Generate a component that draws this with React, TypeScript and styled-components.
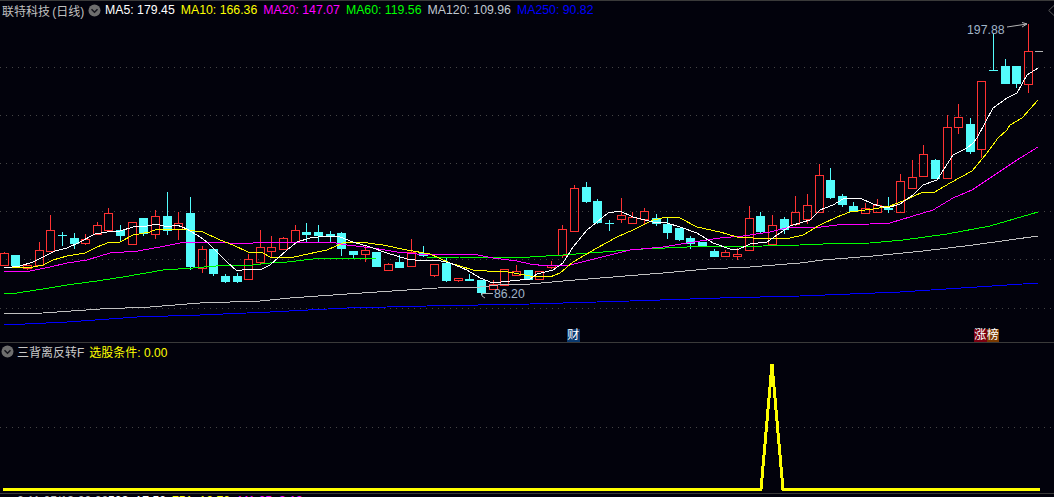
import styled, { createGlobalStyle } from "styled-components";

type Candle = {
  kind: "r" | "c";
  top: number;
  bottom: number;
  high?: number;
  low?: number;
};

const c = (kind: "r" | "c", top: number, bottom: number, high?: number, low?: number): Candle => ({
  kind,
  top,
  bottom,
  high,
  low,
});

const CANDLES: Candle[] = [
  c("r", 253, 265, 252),
  c("c", 255, 265, undefined, 267),
  c("r", 265, 268, undefined, 270),
  c("r", 250, 265, 242),
  c("r", 230, 251, 215),
  c("c", 235, 235, 232, 246),
  c("c", 238, 243, 233, 249),
  c("r", 239, 243, 234, 245),
  c("r", 225, 234, 222),
  c("r", 213, 230, 208),
  c("c", 230, 235, 225, 241),
  c("r", 222, 244),
  c("c", 218, 233, undefined, 236),
  c("r", 216, 234, 210, 239),
  c("c", 216, 230, 192, 235),
  c("r", 223, 229, 212, 240),
  c("c", 213, 266, 197, 270),
  c("r", 249, 268, 246, 273),
  c("c", 249, 273, undefined, 276),
  c("c", 276, 281, 274, 283),
  c("c", 276, 281, 273, 283),
  c("r", 259, 279, 254),
  c("r", 247, 262, 230, 264),
  c("r", 247, 251, 236, 257),
  c("r", 238, 249, 237),
  c("r", 230, 242, 225),
  c("c", 232, 234, 223, 242),
  c("c", 232, 235, 225, 242),
  c("c", 234, 236, 231, 242),
  c("c", 233, 248, 232, 256),
  c("c", 251, 254, undefined, 258),
  c("r", 250, 254, 246, 262),
  c("c", 252, 266),
  c("r", 264, 270, 263),
  c("c", 262, 267, 255),
  c("r", 252, 266, 239, 267),
  c("c", 253, 255, 246, 257),
  c("r", 264, 275, undefined, 277),
  c("c", 263, 280, 258, 282),
  c("r", 278, 280, undefined, 282),
  c("c", 279, 280, 274, 281),
  c("c", 280, 292, undefined, 295),
  c("r", 284, 289, 280),
  c("r", 269, 285),
  c("r", 271, 275, 265),
  c("c", 270, 279),
  c("r", 271, 279, undefined, 280),
  c("r", 265, 267, 261, 269),
  c("r", 229, 255, 225, 258),
  c("r", 188, 231, 185),
  c("c", 187, 201, 182, 203),
  c("c", 201, 222, 199, 224),
  c("c", 223, 223, 220, 231),
  c("r", 215, 219, 198, 223),
  c("r", 217, 223, 212, 224),
  c("r", 211, 219, 208, 225),
  c("c", 218, 223, 214, 226),
  c("c", 224, 232, 218, 239),
  c("c", 228, 239, undefined, 241),
  c("c", 238, 243, 236, 249),
  c("c", 242, 246),
  c("c", 251, 256, 249),
  c("r", 252, 256, 250),
  c("r", 254, 256, 248, 260),
  c("r", 218, 250, 206),
  c("c", 216, 231, 212, 234),
  c("r", 225, 244, 215, 246),
  c("c", 219, 229, 217, 234),
  c("r", 212, 224, 196, 226),
  c("r", 205, 219, 194, 224),
  c("r", 175, 212, 164),
  c("c", 180, 197, 168, 199),
  c("c", 196, 204, 194, 207),
  c("c", 206, 211, 202),
  c("r", 208, 213, 203),
  c("r", 205, 212, 199),
  c("c", 208, 209, 197, 213),
  c("r", 181, 212, 174),
  c("r", 177, 188, 160),
  c("r", 154, 176, 145),
  c("c", 160, 178, 159),
  c("r", 127, 178, 115),
  c("r", 117, 127, 104, 134),
  c("c", 124, 151, 118, 154),
  c("r", 81, 149, undefined, 158),
  c("c", 70, 70, 33),
  c("c", 66, 83, 59),
  c("c", 66, 83, undefined, 88),
  c("r", 51, 84, 24, 93),
];

const MA_LINES = [
  {
    color: "#0000ff",
    points:
      "4,325 67,322 137,317 200,315 270,312 347,308 427,306 530,304 630,301 720,298 800,296 900,292 1038,283",
  },
  {
    color: "#c0c0c0",
    points:
      "4,314 43,313 100,309 150,307 200,303 260,301 290,298 347,294 407,290 453,287 480,287 507,284 530,284 563,281 613,277 663,273 707,269 750,267 800,263 823,260 873,256 923,251 973,245 1038,236",
  },
  {
    color: "#00ff00",
    points:
      "4,294 17,293 43,289 67,285 97,281 123,277 163,270 193,268 227,265 253,265 270,263 287,262 313,259 377,258 427,258 460,257 530,257 563,255 603,252 643,249 687,247 763,246 800,245 823,244 870,243 903,240 947,234 990,226 1038,212",
  },
  {
    color: "#ff00ff",
    points:
      "4,272 30,271 50,267 67,263 87,260 110,253 138,251 160,247 180,243 200,242 220,242 237,244 253,243 270,242 293,242 330,242 347,245 373,248 397,252 417,254 473,254 493,258 517,261 530,264 547,266 570,265 590,260 610,255 630,250 663,247 687,243 720,238 743,236 770,232 790,227 813,228 837,225 870,224 890,223 923,213 933,210 953,198 972,190 990,178 1017,160 1038,147",
  },
  {
    color: "#ffff00",
    points:
      "4,267 33,267 43,265 53,260 67,256 85,253 97,247 110,242 120,242 133,235 150,232 157,229 180,229 203,232 220,240 233,245 248,252 263,253 270,257 290,258 303,255 327,250 343,243 360,242 383,245 407,250 430,254 450,263 473,270 487,271 503,271 530,276 550,277 560,273 573,262 597,248 617,237 633,230 653,220 667,217 680,218 697,227 720,232 737,237 753,238 767,239 790,238 803,235 820,225 837,217 850,212 873,209 890,206 903,201 923,192 935,192 950,183 972,171 987,153 998,138 1007,130 1010,125 1022,118 1038,100",
  },
  {
    color: "#ffffff",
    points:
      "4,268 20,266 33,262 43,257 55,251 67,248 80,242 95,234 107,232 120,231 133,227 147,226 157,224 167,227 177,225 187,229 200,237 207,242 217,252 227,262 237,271 248,269 262,269 270,265 287,250 297,242 310,238 327,236 340,237 353,242 370,247 387,253 407,259 423,261 437,260 450,263 467,270 480,278 493,283 510,281 530,279 537,274 553,270 563,263 573,247 587,230 597,222 608,213 620,211 633,217 653,222 667,223 680,227 697,233 713,243 730,249 737,250 750,244 767,242 780,233 790,226 803,222 810,220 820,210 833,205 843,199 860,198 873,204 887,208 900,204 913,195 923,185 937,180 953,155 967,148 973,143 977,138 993,108 1007,98 1017,93 1027,75 1038,68",
  },
];

const MA_LABELS = [
  { label: "MA5: 179.45", color: "#ffffff" },
  { label: "MA10: 166.36", color: "#ffff00" },
  { label: "MA20: 147.07", color: "#ff00ff" },
  { label: "MA60: 119.56", color: "#00ff00" },
  { label: "MA120: 109.96", color: "#c0c8d0" },
  { label: "MA250: 90.82", color: "#0000ff" },
];

const GRID_MAIN = [67, 115, 163, 211, 259, 308];

function candleX(i: number) {
  return Math.round(3.7 + 11.64 * i);
}

function CandleMark({ candle, x }: { candle: Candle; x: number }) {
  const color = candle.kind === "r" ? "#ff3232" : "#54fcfc";
  const cx = x + 0.5;
  const flat = candle.bottom - candle.top < 1;
  return (
    <g>
      {candle.high !== undefined && (
        <line x1={cx} x2={cx} y1={candle.high} y2={candle.top} stroke={color} />
      )}
      {candle.low !== undefined && (
        <line x1={cx} x2={cx} y1={candle.bottom} y2={candle.low} stroke={color} />
      )}
      {flat ? (
        <line x1={x - 4} x2={x + 5} y1={candle.top + 0.5} y2={candle.top + 0.5} stroke={color} />
      ) : candle.kind === "r" ? (
        <rect
          x={x - 3.5}
          y={candle.top + 0.5}
          width={8}
          height={candle.bottom - candle.top}
          fill="none"
          stroke={color}
        />
      ) : (
        <rect x={x - 4} y={candle.top} width={9} height={candle.bottom - candle.top + 1} fill={color} />
      )}
    </g>
  );
}

function Toggle() {
  return (
    <ToggleIcon viewBox="0 0 13 13">
      <circle cx="6.5" cy="6.5" r="6" fill="#6e6e6e" />
      <path d="M3.5 5.2 L6.5 8.2 L9.5 5.2" fill="none" stroke="#15151c" strokeWidth="1.5" />
    </ToggleIcon>
  );
}

export default function App() {
  return (
    <>
      <GlobalStyle />
      <Screen>
        <MainPanel>
          <PanelHeader>
            <Title>联特科技 (日线)</Title>
            <Toggle />
            <MaList>
              {MA_LABELS.map((m) => (
                <MaValue key={m.label} $color={m.color}>
                  {m.label}
                </MaValue>
              ))}
            </MaList>
            <CollapseIcon viewBox="0 0 6 11">
              <path d="M6 0.5 L0.7 5.5 L6 10.5" />
            </CollapseIcon>
          </PanelHeader>
          <ChartArea>
            <MainChart viewBox="0 19 1054 323">
              {GRID_MAIN.map((y) => (
                <GridLine key={y} x1={0} x2={1054} y1={y + 0.5} y2={y + 0.5} />
              ))}
              {CANDLES.map((candle, i) => (
                <CandleMark key={i} candle={candle} x={candleX(i)} />
              ))}
              <line x1={1035} x2={1043} y1={51.5} y2={51.5} stroke="#b4b4b4" />
              {MA_LINES.map((m) => (
                <polyline key={m.color} points={m.points} fill="none" stroke={m.color} />
              ))}
              <PriceLabel x={967} y={34}>
                197.88
              </PriceLabel>
              <ArrowPath d="M1007 27 L1027 24 M1022 22.5 L1027 24 L1022 27" />
              <PriceLabel x={494} y={298}>
                86.20
              </PriceLabel>
              <ArrowPath d="M482 293.5 L493 293.5 M482 293.5 L482 296 M482 296 L485 298" />
            </MainChart>
            <Marker $left={567}>
              <MarkerCell $bg="#0a3a70">财</MarkerCell>
            </Marker>
            <Marker $left={974}>
              <MarkerCell $bg="#7a0010">涨</MarkerCell>
              <MarkerCell $bg="#7a3a00">榜</MarkerCell>
            </Marker>
          </ChartArea>
        </MainPanel>
        <SubPanel>
          <SubHeader>
            <Toggle />
            <SubTitle>三背离反转F</SubTitle>
            <Condition>选股条件: 0.00</Condition>
          </SubHeader>
          <SubChart viewBox="0 359 1054 133">
            <GridLine x1={0} x2={1054} y1={427.5} y2={427.5} />
            <SignalLine points="3,489.5 761,489.5 772,364 783,489.5 1040,489.5" />
          </SubChart>
        </SubPanel>
        <NextPanel>
          <NextText $color="#b8b8b8" $width={91}>
            2.11 05/13 00:00
          </NextText>
          <NextText $color="#ffffff" $width={64}>
            503: 17.50
          </NextText>
          <NextText $color="#ffff00" $width={66}>
            751: 12.70
          </NextText>
          <NextText $color="#ff00ff" $width={70}>
            M1.65: 3.13
          </NextText>
        </NextPanel>
      </Screen>
    </>
  );
}

const GlobalStyle = createGlobalStyle`
  html, body {
    margin: 0;
    padding: 0;
    background: #02020c;
  }
`;

const Screen = styled.div`
  width: 1054px;
  height: 497px;
  overflow: hidden;
  display: flex;
  flex-direction: column;
  background: #02020c;
  font-family: "Liberation Sans", "Noto Sans CJK SC", sans-serif;
  font-size: 12.3px;
`;

const MainPanel = styled.section`
  flex: none;
  height: 342px;
  border-top: 1px solid #3a3a3a;
  box-sizing: border-box;
  display: flex;
  flex-direction: column;
`;

const PanelHeader = styled.header`
  flex: none;
  height: 18px;
  display: flex;
  align-items: center;
  padding-left: 2px;
  white-space: nowrap;
`;

const Title = styled.span`
  color: #c0c0c0;
  font-size: 12px;
  word-spacing: -1px;
  margin-right: 6px;
  width: 80px;
`;

const ToggleIcon = styled.svg`
  flex: none;
  width: 13px;
  height: 13px;
`;

const MaList = styled.div`
  display: flex;
  gap: 6px;
  margin-left: 4px;
`;

const MaValue = styled.span<{ $color: string }>`
  color: ${(p) => p.$color};
`;

const CollapseIcon = styled.svg`
  flex: none;
  margin-left: auto;
  width: 6px;
  height: 11px;
  fill: none;
  stroke: #5a5a5a;
`;

const ChartArea = styled.div`
  position: relative;
  flex: 1;
  min-height: 0;
`;

const MainChart = styled.svg`
  display: block;
  width: 1054px;
  height: 323px;
  shape-rendering: crispEdges;
`;

const GridLine = styled.line`
  stroke: #454545;
  stroke-dasharray: 1 5;
`;

const PriceLabel = styled.text`
  fill: #a0b4c8;
  font-size: 12.3px;
  shape-rendering: auto;
`;

const ArrowPath = styled.path`
  fill: none;
  stroke: #b4b4b4;
  shape-rendering: auto;
`;

const Marker = styled.div<{ $left: number }>`
  position: absolute;
  left: ${(p) => p.$left}px;
  bottom: 0;
  display: flex;
`;

const MarkerCell = styled.span<{ $bg: string }>`
  width: 12.5px;
  height: 13px;
  line-height: 13px;
  text-align: center;
  font-size: 12px;
  color: #ffffff;
  background: ${(p) => p.$bg};
`;

const SubPanel = styled.section`
  flex: none;
  height: 150px;
  border-top: 1px solid #3a3a3a;
  display: flex;
  flex-direction: column;
`;

const SubHeader = styled.header`
  flex: none;
  height: 16px;
  display: flex;
  align-items: center;
  padding-left: 1px;
  white-space: nowrap;
`;

const SubTitle = styled.span`
  color: #c8c8c8;
  font-size: 12px;
  margin-left: 3px;
`;

const Condition = styled.span`
  color: #ffff00;
  font-size: 12px;
  margin-left: 5px;
`;

const SubChart = styled.svg`
  display: block;
  width: 1054px;
  height: 133px;
  shape-rendering: crispEdges;
`;

const SignalLine = styled.polyline`
  fill: none;
  stroke: #ffff00;
  stroke-width: 3;
`;

const NextPanel = styled.footer`
  flex: none;
  height: 14px;
  border-top: 1px solid #3a3a3a;
  display: flex;
  padding-left: 17px;
  white-space: nowrap;
`;

const NextText = styled.span<{ $color: string; $width: number }>`
  color: ${(p) => p.$color};
  width: ${(p) => p.$width}px;
`;
